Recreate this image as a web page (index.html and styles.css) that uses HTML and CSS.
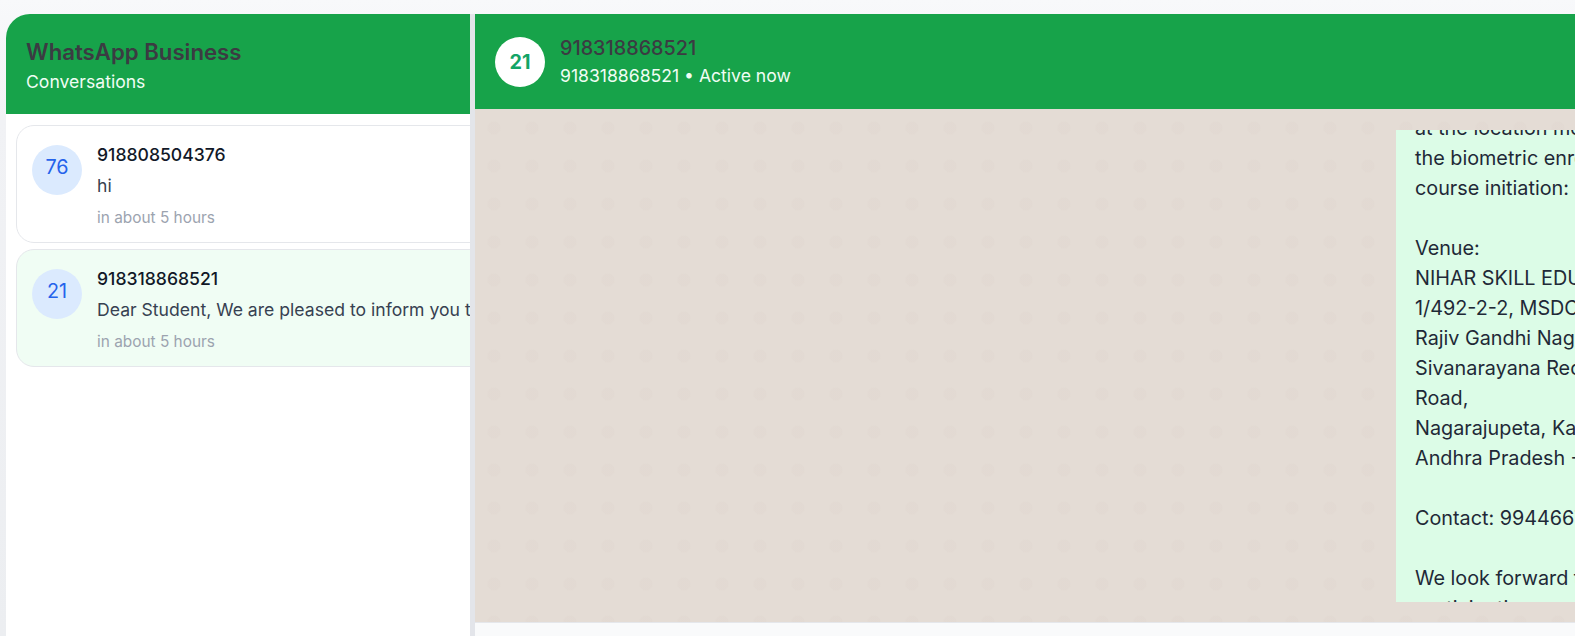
FILE: index.html
```html
<!DOCTYPE html>
<html lang="en">
<head>
<meta charset="utf-8">
<title>WhatsApp Business</title>
<link rel="stylesheet" href="styles.css">
</head>
<body>
<div class="app">
  <aside class="sidebar">
    <header class="sidebar-head">
      <h1 class="sidebar-title">WhatsApp Business</h1>
      <p class="sidebar-sub">Conversations</p>
    </header>
    <div class="conv-list">
      <div class="conv-card">
        <div class="conv-avatar">76</div>
        <div class="conv-body">
          <div class="conv-name">918808504376</div>
          <div class="conv-preview">hi</div>
          <div class="conv-time">in about 5 hours</div>
        </div>
      </div>
      <div class="conv-card conv-card-active">
        <div class="conv-avatar">21</div>
        <div class="conv-body">
          <div class="conv-name">918318868521</div>
          <div class="conv-preview">Dear Student, We are pleased to inform you that your admission has been confirmed.</div>
          <div class="conv-time">in about 5 hours</div>
        </div>
      </div>
    </div>
  </aside>
  <div class="divider"></div>
  <main class="chat">
    <header class="chat-head">
      <div class="chat-avatar">21</div>
      <div class="chat-meta">
        <div class="chat-name">918318868521</div>
        <div class="chat-status">918318868521 • Active now</div>
      </div>
    </header>
    <section class="chat-area">
      <div class="messages">
        <div class="msg-row">
          <div class="bubble">Dear Student,

We are pleased to inform you that your admission has been confirmed.
Kindly visit the training centre with the required documents
at the location mentioned below to complete
the biometric enrollment process before
course initiation:

Venue:
NIHAR SKILL EDUCATION PRIVATE LIMITED
1/492-2-2, MSDC Building,
Rajiv Gandhi Nagar,
Sivanarayana Reddy Colony, Near Bus Stand
Road,
Nagarajupeta, Kadapa,
Andhra Pradesh - 516001

Contact: 9944667788

We look forward to your
participation.</div>
        </div>
      </div>
    </section>
    <footer class="composer"></footer>
  </main>
</div>
</body>
</html>
```

FILE: styles.css
```css
* { box-sizing: border-box; }

html, body {
  margin: 0;
  padding: 0;
  height: 100%;
  overflow: hidden;
}

body {
  font-family: Inter, "Noto Sans", "Liberation Sans", sans-serif;
  background: linear-gradient(to bottom, #f8f9fb 0px, #f1f2f5 120px, #eceef1 636px);
}

.app {
  display: flex;
  width: 1970px;
  height: 700px;
  margin: 14px 0 0 6px;
}

/* ---------- sidebar ---------- */
.sidebar {
  width: 464px;
  flex: none;
  display: flex;
  flex-direction: column;
  background: #ffffff;
  border-top-left-radius: 24px;
  overflow: hidden;
}

.sidebar-head {
  height: 100px;
  flex: none;
  background: #17a34a;
  padding: 23px 20px 0;
}

.sidebar-title {
  margin: 0;
  font-size: 22.2px;
  line-height: 30px;
  font-weight: 600;
  color: #3b3b42;
}

.sidebar-sub {
  margin: 2px 0 0;
  font-size: 17.6px;
  line-height: 26px;
  color: #f0fdf4;
}

.conv-list {
  display: flex;
  flex-direction: column;
  gap: 6px;
  padding: 11px 0 0 10px;
}

.conv-card {
  width: 620px;
  flex: none;
  display: flex;
  align-items: flex-start;
  gap: 15px;
  padding: 19px 15px 14px;
  border: 1px solid #e5e7eb;
  border-radius: 18px;
  background: #ffffff;
}

.conv-card-active {
  background: #f0fdf4;
}

.conv-avatar {
  width: 50px;
  height: 50px;
  flex: none;
  border-radius: 50%;
  background: #dbeafe;
  color: #2563eb;
  font-size: 19.8px;
  padding-bottom: 6px;
  display: flex;
  align-items: center;
  justify-content: center;
}

.conv-body {
  min-width: 0;
  margin-top: -2px;
}

.conv-name {
  font-size: 17.6px;
  line-height: 24px;
  font-weight: 500;
  color: #111827;
  margin-bottom: 7px;
}

.conv-preview {
  font-size: 17.6px;
  line-height: 24px;
  color: #374151;
  white-space: nowrap;
  margin-bottom: 10px;
}

.conv-time {
  font-size: 15.4px;
  line-height: 20px;
  color: #9ca3af;
}

.divider {
  width: 5px;
  flex: none;
  background: #e3e5ea;
}

/* ---------- chat ---------- */
.chat {
  flex: 1;
  display: flex;
  flex-direction: column;
  min-width: 0;
}

.chat-head {
  height: 95px;
  flex: none;
  background: #17a34a;
  display: flex;
  align-items: center;
  gap: 15px;
  padding: 0 20px;
}

.chat-avatar {
  width: 50px;
  height: 50px;
  flex: none;
  border-radius: 50%;
  background: #ffffff;
  color: #13a466;
  font-size: 19.8px;
  font-weight: 700;
  display: flex;
  align-items: center;
  justify-content: center;
}

.chat-name {
  font-size: 19.8px;
  line-height: 28px;
  font-weight: 500;
  color: #3b3b42;
}

.chat-status {
  margin-top: 1px;
  font-size: 17.6px;
  line-height: 26px;
  color: #f0fdf4;
}

.chat-area {
  height: 513px;
  flex: none;
  background-color: #e4dcd5;
  background-image: radial-gradient(circle, rgba(218, 208, 198, 0.18) 6px, transparent 7px);
  background-size: 38px 38px;
  padding: 21px 20px 20px;
}

.messages {
  height: 100%;
  overflow: hidden;
}

.msg-row {
  display: flex;
  justify-content: flex-end;
  margin-top: -149px;
}

.bubble {
  width: 560px;
  background: #dcfce7;
  color: #1f2937;
  font-size: 19.8px;
  line-height: 30px;
  padding: 12px 19px;
  white-space: pre;
}

.composer {
  flex: 1;
  background: #f9fafb;
  border-top: 1px solid #e5e7eb;
}
```
